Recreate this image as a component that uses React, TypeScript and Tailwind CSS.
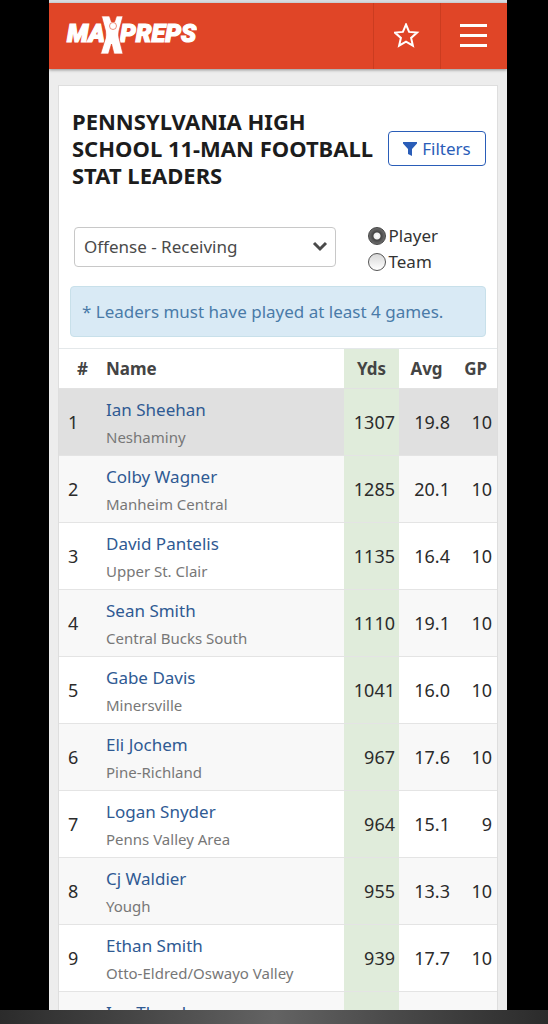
import { FC, useState } from "react";

interface Leader {
  rank: string;
  name: string;
  school: string;
  yds: string;
  avg: string;
  gp: string;
}

const leaders: Leader[] = [
  { rank: "1", name: "Ian Sheehan", school: "Neshaminy", yds: "1307", avg: "19.8", gp: "10" },
  { rank: "2", name: "Colby Wagner", school: "Manheim Central", yds: "1285", avg: "20.1", gp: "10" },
  { rank: "3", name: "David Pantelis", school: "Upper St. Clair", yds: "1135", avg: "16.4", gp: "10" },
  { rank: "4", name: "Sean Smith", school: "Central Bucks South", yds: "1110", avg: "19.1", gp: "10" },
  { rank: "5", name: "Gabe Davis", school: "Minersville", yds: "1041", avg: "16.0", gp: "10" },
  { rank: "6", name: "Eli Jochem", school: "Pine-Richland", yds: "967", avg: "17.6", gp: "10" },
  { rank: "7", name: "Logan Snyder", school: "Penns Valley Area", yds: "964", avg: "15.1", gp: "9" },
  { rank: "8", name: "Cj Waldier", school: "Yough", yds: "955", avg: "13.3", gp: "10" },
  { rank: "9", name: "Ethan Smith", school: "Otto-Eldred/Oswayo Valley", yds: "939", avg: "17.7", gp: "10" },
  { rank: "", name: "Ian Thrush", school: "", yds: "", avg: "", gp: "" },
];

const Logo: FC = () => (
  <svg width="132" height="40" viewBox="0 0 132 40" fill="#fff" role="img" aria-label="MaxPreps">
    <g fontFamily="Roboto, sans-serif" fontWeight="900" fontStyle="italic" fontSize="25" stroke="#fff" strokeWidth="1.2">
      <text x="2" y="26">MA</text>
      <text x="55" y="26">PREPS</text>
    </g>
    <path
      d="M36.500 0h8l2 6h3l2-6h6.500l-4 15q-.8 4 0 7l4 16h-9l-2.500-10-3 10h-8l5-16q.5-3 0-7z"
      stroke="#e04527"
      strokeWidth="0.7"
    />
    <circle cx="48" cy="10" r="3.5" stroke="#e04527" strokeWidth="0.6" />
  </svg>
);

const TopBar: FC = () => (
  <header className="flex h-[66px] shrink-0 bg-[#e04527] shadow-[0_1px_3px_rgba(0,0,0,0.4)]">
    <a href="#" className="flex grow items-center pl-4">
      <Logo />
    </a>
    <button aria-label="Favorites" className="flex w-[67px] items-center justify-center border-l border-[#cb3c20]">
      <svg width="26" height="26" viewBox="0 0 26 26" fill="none" stroke="#fff" strokeWidth="2">
        <path d="M12 1.500l3.100 7.400 8 .7-6 5.300 1.800 7.800-6.900-4.100-6.900 4.100 1.800-7.800-6-5.300 8-.7z" />
      </svg>
    </button>
    <button aria-label="Menu" className="flex w-[67px] items-center justify-center border-l border-[#cb3c20]">
      <svg width="28" height="24" viewBox="0 0 28 24" fill="#fff">
        <path d="M0 0h27v3H0zM0 10h27v3H0zM0 20h27v3H0z" />
      </svg>
    </button>
  </header>
);

const Controls: FC = () => {
  const [view, setView] = useState("player");

  return (
    <div className="flex items-start justify-between pl-[15px] pr-[59px]">
      <div className="relative mt-1 h-10 w-[262px]">
        <select
          aria-label="Stat category"
          className="h-10 w-full appearance-none rounded border border-[#c8c8c8] bg-white pl-[9px] text-[17px] text-[#4a4a4a]"
        >
          <option>Offense - Receiving</option>
        </select>
        <svg
          className="pointer-events-none absolute right-2 top-[14px]"
          width="16"
          height="11"
          viewBox="0 0 16 11"
          fill="none"
          stroke="#4a4a4a"
          strokeWidth="3"
        >
          <path d="M2 2l6 6 6-6" />
        </svg>
      </div>
      <div className="text-[17px] leading-[26px] text-[#333]">
        {["Player", "Team"].map((label) => (
          <label key={label} className="flex items-center gap-[3px]">
            <input
              type="radio"
              name="view"
              checked={view === label.toLowerCase()}
              onChange={() => setView(label.toLowerCase())}
              className="size-[18px] appearance-none rounded-full border border-[#555] bg-linear-to-b from-[#d8d8d8] to-white checked:border-[#444] checked:bg-[radial-gradient(circle,#fff_0,#eee_3px,#444_4px,#777_9px)]"
            />
            {label}
          </label>
        ))}
      </div>
    </div>
  );
};

const LeadersTable: FC = () => (
  <table className="mt-[11px] w-full table-fixed border-t border-[#e4e8ea] text-[#2b2b2b]">
    <colgroup>
      <col className="w-[47px]" />
      <col />
      <col className="w-[55px]" />
      <col className="w-[51px]" />
      <col className="w-[47px]" />
    </colgroup>
    <thead>
      <tr className="h-10 border-b border-[#e2e2e2] text-[17px] text-[#444]">
        <th className="text-center">#</th>
        <th className="text-left">Name</th>
        <th className="bg-[#e0ecdb] text-center">Yds</th>
        <th className="pl-1 text-center">Avg</th>
        <th className="pr-[10px] text-right">GP</th>
      </tr>
    </thead>
    <tbody>
      {leaders.map((leader) => (
        <tr
          key={leader.name}
          className="h-[67px] border-b border-[#e4e4e4] text-[18px] first:bg-[#e0e0e0] even:bg-[#f8f8f8]"
        >
          <td className="pl-[9px]">{leader.rank}</td>
          <td className="whitespace-nowrap align-top">
            <a href="#" className="mt-2 block text-[17px] leading-[26px] text-[#2f5a93]">
              {leader.name}
            </a>
            <span className="block text-[15px] leading-[28px] text-[#777]">{leader.school}</span>
          </td>
          <td className="bg-[#e0ecdb] pr-1 text-right">{leader.yds}</td>
          <td className="text-right">{leader.avg}</td>
          <td className="pr-[5px] text-right">{leader.gp}</td>
        </tr>
      ))}
    </tbody>
  </table>
);

const App: FC = () => {
  return (
    <div className="flex h-screen flex-col overflow-hidden bg-black font-['Noto_Sans',sans-serif]">
      <div className="ml-[49px] mr-[41px] flex min-h-0 flex-1 flex-col overflow-hidden bg-[#ededed]">
        <div className="h-[3px] shrink-0 bg-[#d9dde2]" />
        <TopBar />
        <main className="mx-[9px] mt-4 border border-[#dedede] bg-white">
          <div className="flex items-center justify-between pl-[13px] pr-[11px] pt-[22px]">
            <h1 className="whitespace-nowrap text-[22px] font-bold leading-[27px] text-[#1c1c1c]">
              PENNSYLVANIA HIGH
              <br />
              SCHOOL 11-MAN FOOTBALL
              <br />
              STAT LEADERS
            </h1>
            <button className="flex h-[35px] w-[98px] shrink-0 items-center justify-center gap-[5px] rounded border border-[#2a5db8] text-[17px] text-[#2a5db8]">
              <svg width="14" height="14" viewBox="0 0 14 14" fill="currentColor">
                <path d="M0 0h14v1.500L9 7v7l-4-2V7L0 1.500z" />
              </svg>
              Filters
            </button>
          </div>
          <div className="mt-[34px]">
            <Controls />
          </div>
          <p className="mx-[11px] mt-[11px] flex h-[51px] items-center rounded border border-[#c8e0ea] bg-[#d9eaf5] pl-[11px] text-[17px] text-[#4a7ba8]">
            * Leaders must have played at least 4 games.
          </p>
          <LeadersTable />
        </main>
      </div>
      <footer className="h-[14px] shrink-0 bg-linear-to-r from-[#2b2b2b] via-[#636363] to-[#2b2b2b]" />
    </div>
  );
};

export default App;
